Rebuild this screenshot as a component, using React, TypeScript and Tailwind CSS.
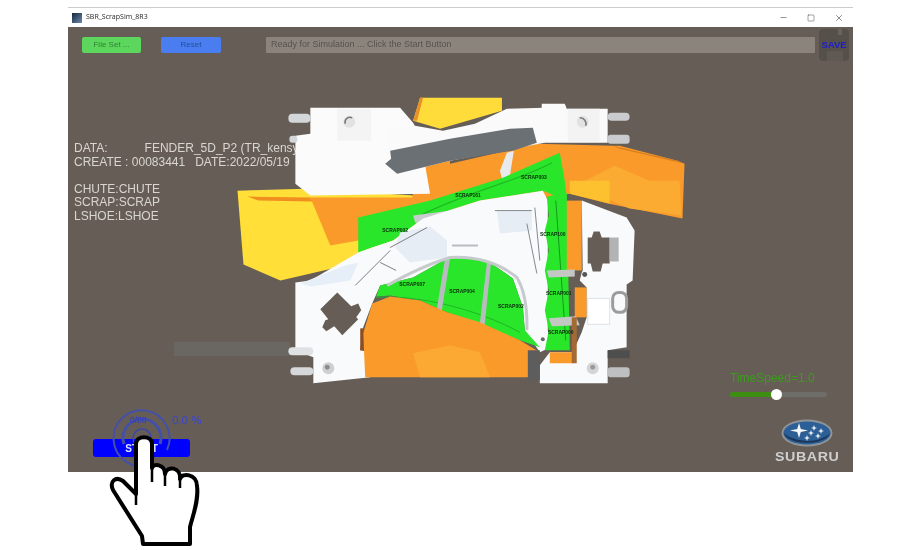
import { Minus, Square, X } from "lucide-react";

const LABELS: [string, number, number][] = [
  ["SCRAP002", 395, 229],
  ["SCRAP161", 468, 194],
  ["SCRAP003", 534, 176],
  ["SCRAP100", 553, 233],
  ["SCRAP007", 412, 284],
  ["SCRAP004", 462, 291],
  ["SCRAP002", 511, 306],
  ["SCRAP001", 559, 293],
  ["SCRAP006", 561, 332],
];

function DieModel() {
  return (
    <svg viewBox="68 26 785 446" className="absolute inset-0 w-full h-full">
      {/* chutes */}
      <polygon points="237,190 305,188 430,196 430,240 358,262 280,280 243,264" fill="#ffdf38" />
      <polygon points="310,197 430,197 400,225 358,240 330,245" fill="#fa9a2a" />
      <polygon points="247,196 310,197 312,201 258,200" fill="#f08f20" />
      <polygon points="413,120 420,97 502,97 502,110 440,128" fill="#ffdc3a" />
      <polygon points="413,120 420,97 423,97 417,120" fill="#e8902a" />
      <polygon points="450,163 537,143 613,145 620,145 678,160 685,163 683,218 608,203 570,193 450,213" fill="#fa9a2a" />
      <polygon points="585,180 615,165 650,180 680,180 682,215 630,208 600,195" fill="#fbab32" />
      <polygon points="570,180 610,180 610,203 570,193" fill="#fdc02f" />
      <polygon points="420,165 450,160 450,200 410,205" fill="#fa9a2a" />
      <polygon points="613,145 678,160 685,163 620,148" fill="#d97f20" />
      {/* top dies */}
      <polygon points="310,107 400,107 413,122 420,135 430,193 310,195 295,183 295,135 310,133" fill="#fbfbfb" />
      <rect x="288" y="113" width="22" height="9" rx="4" fill="#d4d7da" />
      <rect x="289" y="135" width="8" height="7" rx="3" fill="#d4d7da" />
      <rect x="337" y="108" width="34" height="32" fill="#f4f4f4" />
      <circle cx="349" cy="121" r="6" fill="#e2e2e2" />
      <path d="M345 123a5 5 0 0 1 7-6" stroke="#777" strokeWidth="1.5" fill="none" />
      <polygon points="385,127 415,125 443,130 475,123 507,108 545,107 545,142 450,160 397,173 388,150" fill="#fafafa" />
      <polygon points="390,150 450,138 510,128 533,127 537,142 513,150 450,160 397,173 385,163 391,158" fill="#6b7075" />
      <polygon points="542,103 565,103 567,108 608,108 608,142 540,142" fill="#fafafa" />
      <rect x="568" y="108" width="32" height="33" fill="#f3f3f3" />
      <circle cx="583" cy="121" r="6" fill="#e2e2e2" />
      <path d="M580 117a6 6 0 0 1 6 8" stroke="#777" strokeWidth="1.5" fill="none" />
      <rect x="608" y="112" width="22" height="8" rx="4" fill="#c9cbce" />
      <rect x="608" y="134" width="22" height="9" rx="3" fill="#c9cbce" />
      <polygon points="507,152 514,150 510,175 505,190 500,170" fill="#e8ebee" />
      {/* large green scrap */}
      <polygon points="358,217 430,200 503,177 560,152 565,180 567,200 543,190 480,200 423,218 393,240 372,247 358,252" fill="#2ae62a" />
      <path d="M420 215C470 190 520 180 552 162" stroke="#1fb824" strokeWidth="1.2" fill="none" />
      <polygon points="413,215 450,210 452,219 443,222 427,225 415,222" fill="#c9ccce" />
      <polygon points="427,219 443,218 443,224 432,228" fill="#55585b" />
      {/* lower block and fender */}
      <polygon points="295,282 310,280 358,252 372,247 393,240 423,218 480,200 543,190 548,200 548,330 553,346 540,352 525,330 523,307 513,278 490,262 470,258 447,258 413,277 380,285 372,303 363,327 360,350 370,352 370,377 313,383 313,357 295,350" fill="#f9fafc" />
      <polygon points="300,283 345,265 358,262 350,280 310,286" fill="#e6eef7" />
      <polygon points="400,232 430,226 447,240 447,257 410,262 395,247" fill="#e6edf4" />
      <polygon points="497,210 532,210 532,230 500,233" fill="#e6edf4" />
      <path d="M495 210H532M527 223L537 273M535 207L540 260" stroke="#85888b" strokeWidth="1" fill="none" />
      <path d="M452 245H478" stroke="#b9bcc0" strokeWidth="2" />
      <path d="M390 247L427 227M355 285L390 250M380 262L396 270" stroke="#7d7f82" strokeWidth="1" fill="none" />
      <polygon points="337,292 351,306 358,303 361,310 356,317 358,319 342,335 334,326 326,331 322,327 325,320 328,319 320,309" fill="#665e56" />
      <rect x="288" y="347" width="25" height="8" rx="4" fill="#dfe2e5" />
      <rect x="290" y="367" width="23" height="8" rx="4" fill="#d6d8db" />
      <circle cx="328" cy="368" r="6" fill="#cfcfcf" />
      <circle cx="327" cy="367" r="2.5" fill="#8d8d8d" />
      {/* lower green */}
      <polygon points="380,285 413,277 447,258 470,258 490,262 513,278 523,307 525,330 540,347 520,340 470,320 447,312 420,300 390,295 376,296" fill="#2ae62a" />
      <path d="M376 297C420 294 480 310 520 332" stroke="#1cb524" strokeWidth="1" fill="none" />
      <polygon points="445,258 450,258 441,315 436,314" fill="#b8bcbf" />
      <polygon points="487,262 491,263 484,332 479,331" fill="#b8bcbf" />
      <path d="M387 285Q423 265 450 257Q490 255 517 277Q528 295 527 330" stroke="#c6cacd" strokeWidth="3" fill="none" />
      {/* lower chute */}
      <polygon points="372,303 390,296 420,300 447,312 480,322 520,340 540,352 530,362 530,377 365,377 363,333" fill="#fa9a2a" />
      <polygon points="413,353 450,345 480,352 490,377 420,377" fill="#fba932" />
      <polygon points="360,328 363,328 363,350 360,350" fill="#8a4d24" />
      {/* right column */}
      <polygon points="547,196 567,192 570,350 545,350 549,330 545,310 549,290 545,270 549,250 545,230 549,215" fill="#2ae62a" />
      <path d="M556 200L566 340" stroke="#15991c" strokeWidth="1" />
      <rect x="567" y="200" width="15" height="70" fill="#fa9a2a" />
      <rect x="575" y="287" width="12" height="30" fill="#fa9a2a" />
      <polygon points="547,270 575,269 575,276 549,277" fill="#c4c8c4" />
      <polygon points="549,318 576,316 580,325 552,326" fill="#c4c8c4" />
      <polygon points="582,200 627,217 635,230 633,280 627,284 627,347 608,350 608,383 540,383 540,365 550,352 573,352 582,332 587,317 587,287 580,280 582,272 583,270" fill="#f9fafc" />
      <rect x="550" y="352" width="23" height="11" fill="#fa9a2a" />
      <rect x="572" y="317" width="5" height="46" fill="#a46a34" />
      <rect x="528" y="350" width="12" height="30" fill="#5d5d5d" />
      <polygon points="588,237 592,237 594,231 600,231 602,237 610,237 610,263 603,263 601,271 593,271 591,263 588,263" fill="#665e56" />
      <rect x="610" y="237" width="9" height="24" fill="#b2b3b5" />
      <rect x="613" y="292" width="14" height="20" rx="6" fill="none" stroke="#9a9c9e" strokeWidth="3" />
      <rect x="588" y="298" width="22" height="26" fill="#ffffff" stroke="#dfe2e5" />
      <circle cx="593" cy="368" r="6" fill="#d5d5d5" />
      <circle cx="593" cy="367" r="2.5" fill="#9a9a9a" />
      <rect x="608" y="350" width="22" height="8" fill="#4e4e4e" />
      <rect x="608" y="367" width="22" height="10" rx="3" fill="#bdbfc1" />
      <circle cx="585" cy="274" r="2.5" fill="#555" />
      <circle cx="543" cy="339" r="2" fill="#666" />
      {LABELS.map(([name, x, y], i) => (
        <text key={i} x={x} y={y + 2} textAnchor="middle" fontSize="5" fontWeight="700" fill="#0b2a0b" fontFamily="Liberation Sans, sans-serif">
          {name}
        </text>
      ))}
    </svg>
  );
}

function SubaruLogo() {
  return (
    <svg viewBox="0 0 52 28" className="w-[52px] h-[28px]">
      <ellipse cx="26" cy="14" rx="25.5" ry="13.5" fill="#8f9499" />
      <ellipse cx="26" cy="14" rx="23.5" ry="11.5" fill="#2d5f97" />
      <path d="M2.5 14C14 24 38 25 49.5 14C44 27 8 27 2.5 14Z" fill="#1c3557" />
      <path d="M18 4l1.8 6 7.2 1.5-7.2 1.5-1.8 6-1.8-6-7.2-1.5 7.200-1.500z" fill="#f4f6f8" />
      {[[33, 9], [40, 12], [30, 14], [37, 17], [26, 19]].map(([x, y], i) => (
        <path key={i} d={`M${x} ${y - 3}l.8 2.200 2.200.8-2.200.8-.8 2.200-.8-2.200-2.200-.8 2.200-.8z`} fill="#eef1f4" />
      ))}
    </svg>
  );
}

function Hand() {
  return (
    <svg viewBox="105 432 100 118" className="absolute left-[105px] top-[432px] w-[100px] h-[118px]">
      <path
        d="M143 544L142 536L113 490C109 481 116 476 123 481L136 494V444C136 435 152 435 152 444V468C153 463 165 464 165 474C167 465 181 467 180 479C182 472 197 474 197 486C199 500 193 515 190 527V544Z"
        fill="#ffffff"
        stroke="#000000"
        strokeWidth="4"
        strokeLinejoin="round"
      />
      <path d="M152 466V482M165 473V486M180 478V488M136 493V505" stroke="#000000" strokeWidth="2.500" fill="none" />
    </svg>
  );
}

export default function App() {
  return (
    <div className="relative w-[920px] h-[550px] bg-white overflow-hidden font-['Liberation_Sans',sans-serif] blur-[0.5px]">
      <div className="absolute left-[68px] top-[7px] w-[785px] h-[465px] flex flex-col border-t border-[#cccccc]">
        <div className="h-[19px] bg-white flex items-center justify-between pl-[4px] pr-[9px]">
          <div className="flex items-center gap-[4px]">
            <div className="w-[10px] h-[10px] bg-gradient-to-br from-[#16283f] to-[#6f8db0]" />
            <span className="text-[7px] text-[#333] font-['Noto_Sans',sans-serif]">SBR_ScrapSim_8R3</span>
          </div>
          <div className="flex items-center gap-[19px] text-[#444]">
            <Minus size={9} strokeWidth={1.5} />
            <Square size={8} strokeWidth={1.5} />
            <X size={10} strokeWidth={1.5} />
          </div>
        </div>

        <div className="relative flex-1 bg-[#665e56] overflow-hidden">
          <div className="absolute left-[6px] top-[115px] text-[12px] leading-[13.5px] text-[#d9d6d1] whitespace-pre">
            <div>{"DATA:"}<span className="ml-[37px]">FENDER_5D_P2 (TR_kensyu)</span></div>
            <div>CREATE : 00083441   DATE:2022/05/19</div>
            <div className="mt-[13.5px]">CHUTE:CHUTE</div>
            <div>SCRAP:SCRAP</div>
            <div>LSHOE:LSHOE</div>
          </div>

          <div className="absolute left-[106px] top-[315px] w-[116px] h-[14px] bg-[#6a6763]" />

          <DieModel />

          <div className="relative flex items-start pl-[14px] pt-[10px] pr-[3px]">
            <button className="w-[59px] h-[16px] rounded-[2px] bg-[#5cd65c] text-[8px] text-[#2f8035]">File Set ...</button>
            <button className="ml-[20px] w-[60px] h-[16px] rounded-[2px] bg-[#4a7df0] text-[8px] text-[#24509a]">Reset</button>
            <div className="ml-[45px] w-[549px] h-[16px] rounded-[1px] bg-[#8a847d] px-[5px] text-[9px] leading-[15px] text-[#57524c]">
              Ready for Simulation ... Click the Start Button
            </div>
            <div className="relative ml-[4px] -mt-[8px] w-[30px] h-[32px] rounded-[4px] bg-[#56504a] flex items-center justify-center">
              <div className="absolute top-0 right-[7px] w-[4px] h-[6px] bg-[#6a635c]" />
              <div className="absolute bottom-0 left-[8px] w-[16px] h-[10px] bg-[#5f5952]" />
              <span className="relative text-[9.5px] font-bold text-[#1d1dd0]">SAVE</span>
            </div>
          </div>

          <div className="absolute left-[25px] top-[412px] w-[97px] h-[18px] rounded-[3px] bg-[#0000ff] flex items-center justify-center text-[10px] font-bold text-[#dfe4ff]">
            START
          </div>
          <svg viewBox="0 0 60 60" className="absolute left-[44px] top-[381px] w-[60px] h-[60px]">
            <path d="M38 57A28 28 0 1 1 55 42" stroke="#4450a8" strokeWidth="2" fill="none" />
            <path d="M12 36A19 19 0 1 1 48 36" stroke="#4450a8" strokeWidth="3" fill="none" />
            <circle cx="30" cy="30" r="9" stroke="#3a45b0" strokeWidth="1.500" fill="none" />
          </svg>
          <div className="absolute left-[62px] top-[388px] text-[8.5px] leading-[10px] text-[#2f3cc0]">0/88</div>
          <div className="absolute left-[104px] top-[387px] text-[11.5px] leading-[13px] text-[#3a45c8]">0.0 %</div>

          <div className="absolute left-[662px] top-[344px] w-[97px]">
            <div className="text-[12px] leading-[14px] text-[#3d9a1f]">TimeSpeed=1.0</div>
            <div className="relative mt-[7px] h-[5px] rounded-full bg-[#6f6d6a]">
              <div className="h-full w-[46px] rounded-full bg-[#3e8e14]" />
              <div className="absolute left-[41px] -top-[3px] w-[11px] h-[11px] rounded-full bg-white" />
            </div>
          </div>

          <div className="absolute left-[705px] top-[392px] w-[68px] flex flex-col items-center">
            <SubaruLogo />
            <div className="mt-[3px] text-[12.500px] leading-[14px] font-bold tracking-[0.5px] text-[#cfcfcf] scale-x-[1.14]">SUBARU</div>
          </div>
        </div>
      </div>
      <Hand />
    </div>
  );
}
